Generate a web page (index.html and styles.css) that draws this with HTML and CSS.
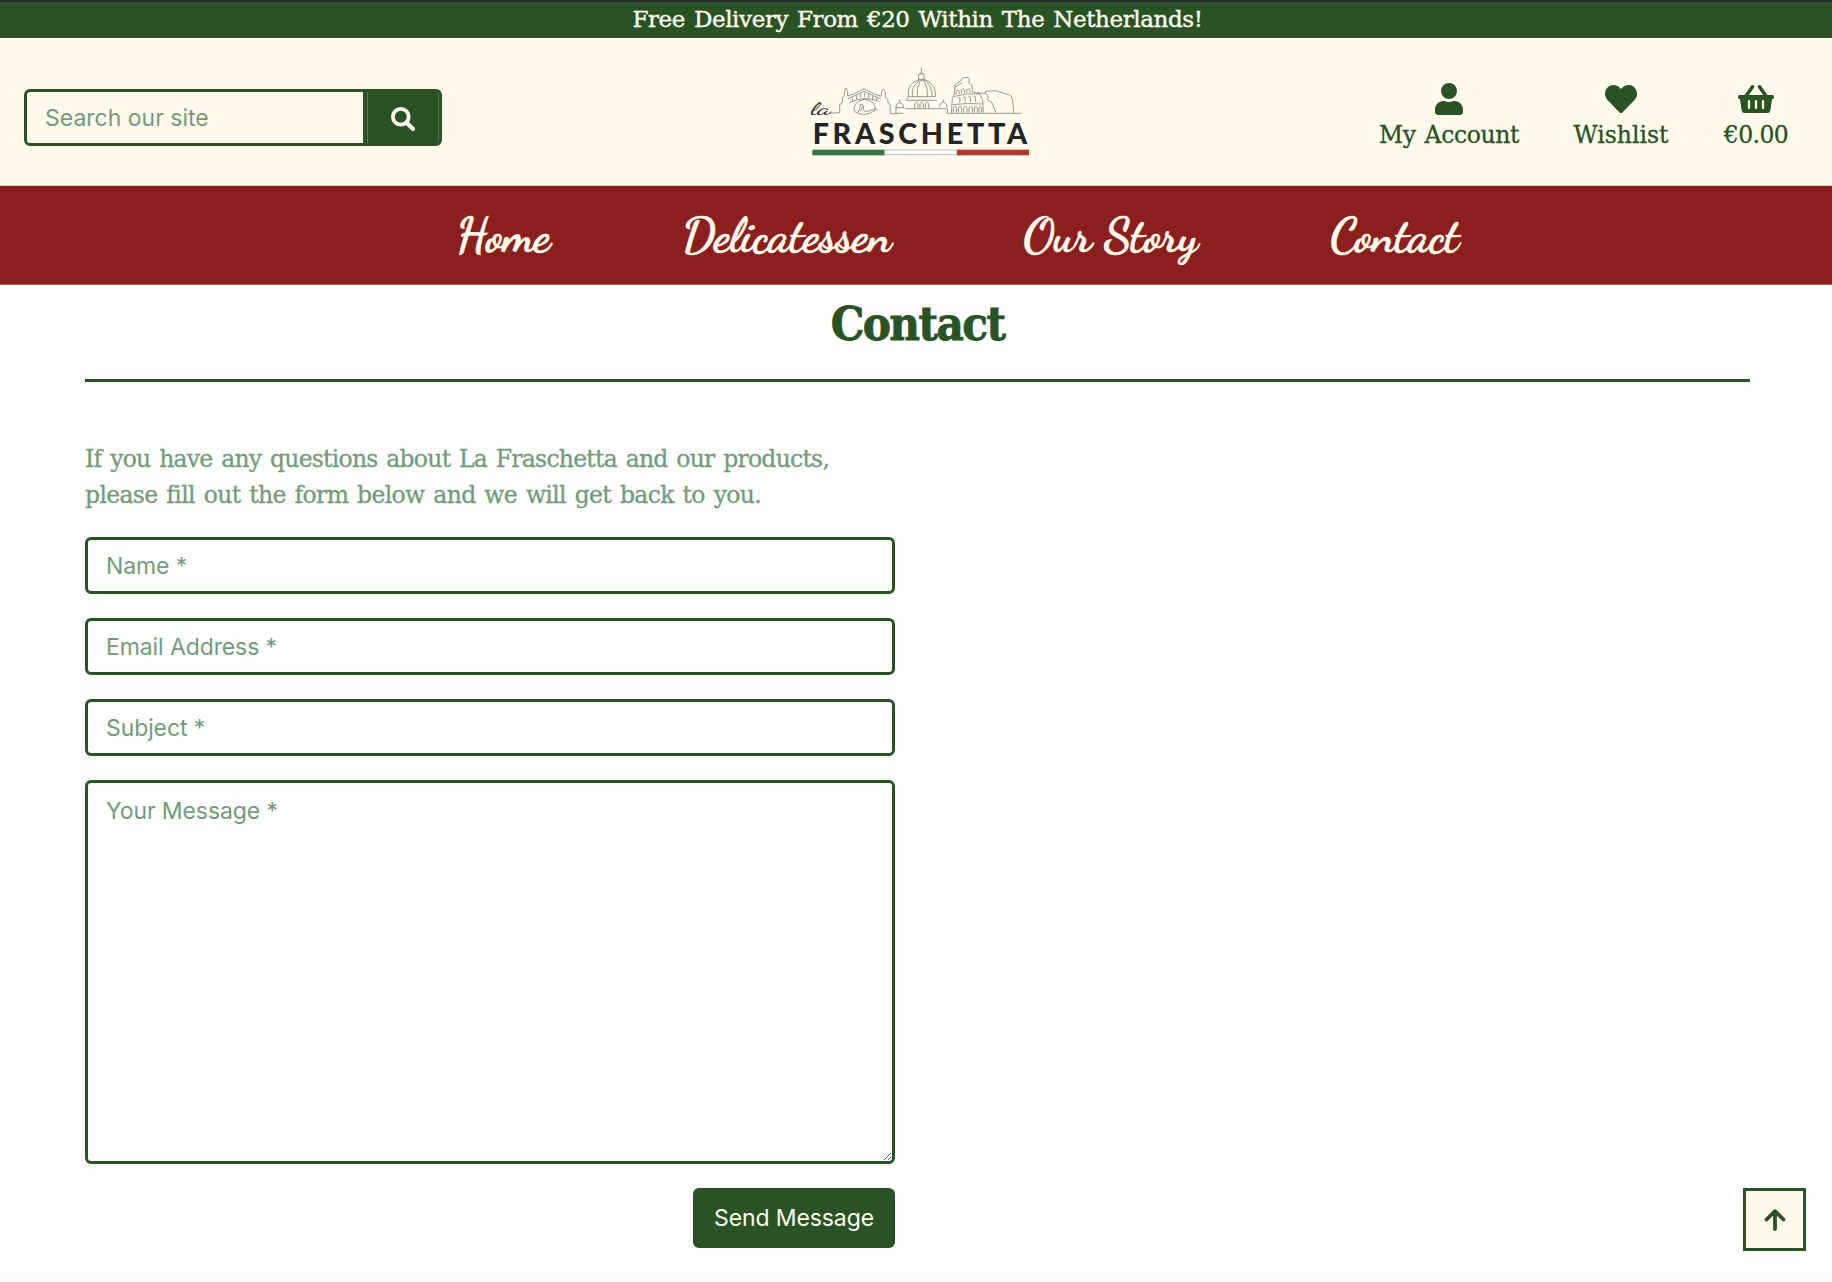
FILE: index.html
```html
<!DOCTYPE html>
<html lang="en">
<head>
<meta charset="utf-8">
<title>La Fraschetta - Contact</title>
<link rel="stylesheet" href="styles.css">
</head>
<body>
<div class="banner"><span>Free Delivery From €20 Within The Netherlands!</span></div>
<header class="header">
  <form class="search">
    <input class="search-input" type="text" placeholder="Search our site">
    <button class="search-button" type="button" aria-label="Search">
      <svg width="24" height="24" viewBox="0 0 24 24" fill="none" stroke="currentColor" stroke-width="3.800" stroke-linecap="round"><circle cx="9.800" cy="9.800" r="7.900"/><path d="M16 16L22 22" stroke-width="4.200"/></svg>
    </button>
  </form>
  <a class="logo" aria-label="La Fraschetta">
    <svg width="260" height="120" viewBox="0 0 780 360">
      <g class="skyline">
        <path d="M116 190L149 188L149 164L156 160L158 142L163 136L163 124L168 114L173 124L173 138L196 130L222 116L244 128L273 139L275 126L280 117L286 125L286 142L293 147L294 158L300 162L301 191L318 191L318 172L315 171M174 146L222 124L272 147M178 158Q222 136 268 154M188 143v10M200 136v12M212 131v12M224 129v12M236 132v12M248 137v12M260 143v10M192 184Q190 154 222 148Q256 150 256 180Q240 194 222 193Q206 194 192 184M204 188Q214 166 210 164Q220 160 220 170L210 184M222 168Q214 186 232 184Q248 180 258 176L264 182"/>
        <path d="M318 172Q318 160 329 157Q340 160 341 172M329 157v-8M318 173h24M318 190h22M346 176H444M350 151H440M355 140H436M348 151L355 140Q350 100 384 91L408 91Q440 104 436 140M368 140Q362 112 386 94M382 140Q380 112 390 94M412 140Q414 112 402 94M426 140Q428 112 408 94M386 90V74Q394 62 402 74V90M394 66V52M384 88h22M389 72h12M374 176V162Q379 150 384 162V176M390 176V162Q395 150 400 162V176M406 176V162Q411 150 416 162V176M448 172Q448 160 460 156Q472 160 472 172M460 156v-8M444 176H472V190H694"/>
        <path d="M484 188L487 146L493 132L495 104L510 94L518 84L534 82L538 90L536 98L545 104L548 126L568 130L578 150L580 188M494 112L516 98M498 134V124Q503 116 508 124V132M514 130V120Q519 112 524 120V130M530 128V120Q535 112 540 120V128M490 140Q530 128 568 132M488 164Q530 158 578 162M503 145Q512 136 509 158M519 143Q528 134 525 157M535 141Q544 132 541 156M550 141Q559 132 556 156M490 188V174Q495 164 500 174V188M505 188V174Q510 164 515 174V188M521 188V174Q526 164 531 174V188M537 188V174Q542 164 547 174V188M553 188V174Q558 164 563 174V188M567 188V174Q571 164 575 174V188M562 129L586 130L594 137L593 150L606 158L618 188M586 130V124L616 122L662 136L668 150L671 189"/>
      </g>
      <text class="logo-la" x="62" y="191" textLength="60" lengthAdjust="spacingAndGlyphs">la</text>
      <text class="logo-name" x="68" y="283" textLength="643" lengthAdjust="spacing">FRASCHETTA</text>
      <rect x="67" y="299" width="217" height="17" fill="#397440"/>
      <rect x="284" y="300" width="217" height="14" fill="#fff" stroke="#bbb" stroke-width="3"/>
      <rect x="501" y="299" width="216" height="17" fill="#af3b2c"/>
    </svg>
  </a>
  <div class="account-links">
    <a class="link account"><svg width="28" height="32" viewBox="0 0 448 512"><path fill="currentColor" d="M224 256a128 128 0 1 0 0-256 128 128 0 1 0 0 256zm89.600 32h-16.700a174 174 0 0 1-145.800 0h-16.700C60.200 288 0 348.200 0 422.400V464c0 26.500 21.500 48 48 48h352c26.500 0 48-21.500 48-48v-41.600c0-74.200-60.200-134.400-134.400-134.400z"/></svg><span>My Account</span></a>
    <a class="link wishlist"><svg width="32" height="32" viewBox="0 0 512 512"><path fill="currentColor" d="M462.300 62.600C407.500 15.900 326 24.300 275.700 76.200L256 96.500l-19.700-20.300C186.100 24.300 104.500 15.900 49.700 62.600c-62.800 53.600-66.100 149.800-9.900 207.900l193.500 199.800c12.500 12.900 32.800 12.900 45.300 0l193.500-199.800c56.300-58.100 53-154.300-9.800-207.900z"/></svg><span>Wishlist</span></a>
    <a class="link basket"><svg width="36" height="32" viewBox="0 0 576 512"><path fill="currentColor" d="M24 192H552Q576 192 576 216V232Q576 256 552 256H544L518 440Q510 480 470 480H106Q66 480 58 440L32 256H24Q0 256 0 232V216Q0 192 24 192Z"/><path fill="none" stroke="currentColor" stroke-width="56" stroke-linecap="round" d="M232 60L128 208M344 60L448 208"/><path class="basket-slots" d="M176 288V400M288 288V400M400 288V400"/></svg><span>€0.00</span></a>
  </div>
</header>
<nav class="nav">
  <a class="home">Home</a>
  <a class="deli">Delicatessen</a>
  <a class="story">Our Story</a>
  <a class="contact">Contact</a>
</nav>
<main class="main">
  <h1 class="title">Contact</h1>
  <hr class="rule">
  <form class="form">
    <p class="intro">If you have any questions about La Fraschetta and our products,<br><span class="intro-end">please fill out the form below and we will get back to you.</span></p>
    <input class="field" type="text" placeholder="Name *">
    <input class="field" type="text" placeholder="Email Address *">
    <input class="field" type="text" placeholder="Subject *">
    <textarea class="field message" placeholder="Your Message *"></textarea>
    <button class="send" type="button">Send Message</button>
  </form>
</main>
<a class="to-top" aria-label="Back to top"><svg width="22" height="24" viewBox="0 0 22 24" fill="none" stroke="currentColor" stroke-width="3.800" stroke-linecap="round" stroke-linejoin="round"><path d="M11 21V3.500M2.500 11.500L11 3.200L19.500 11.500"/></svg></a>
</body>
</html>
```
FILE: styles.css
```css
* { box-sizing: border-box; }
body {
  margin: 0;
  height: 1282px;
  overflow: hidden;
  background: linear-gradient(#fefefe 1256px, #fbfbfb 1282px);
  color: #295225;
  font-family: "Roboto Slab", "DejaVu Serif", serif;
}
.banner {
  height: 38px;
  border-top: 2px solid #29272c;
  background: #295225;
  color: #fffaeb;
  font-size: 23px;
  line-height: 35px;
  text-align: center;
  letter-spacing: -0.4px;
  word-spacing: 2px;
  white-space: nowrap;
  padding-left: 3px;
  -webkit-text-stroke: 0.4px;
}
.header {
  height: 148px;
  display: grid;
  grid-template-columns: 790px 260px 1fr;
  background: #fffaeb;
  border-bottom: 1px solid #dccbbd;
}
.search {
  display: flex;
  width: 418px;
  height: 57px;
  margin: 51px 0 0 24px;
}
.search-input {
  width: 342px;
  border: 3px solid #295225;
  border-radius: 6px 0 0 6px;
  background: #fffaeb;
  padding: 1px 18px 0;
}
.search-input, .field, .send {
  font-family: Inter, sans-serif;
  font-size: 23px;
  letter-spacing: -0.1px;
  outline: none;
}
.search-input { letter-spacing: 0; }
::placeholder { color: #739b7b; opacity: 1; }
.search-button {
  flex: 1;
  display: grid;
  place-items: center;
  border: 3px solid #295225;
  border-left-width: 1px;
  border-radius: 0 6px 6px 0;
  background: #295225;
  box-shadow: inset 1px 0 #557650, inset -1px 0 #557650;
  color: #fffaeb;
  padding: 2px 0 0;
}
.logo { padding-top: 12px; }
.logo svg { display: block; }
.skyline { fill: none; stroke: #77766c; stroke-width: 2.2; stroke-linejoin: round; }
.logo-la { font: 500 54px "Dancing Script", cursive; fill: #33332f; }
.logo-name { font: 900 86px Lato, sans-serif; fill: #242326; }
.account-links { display: flex; padding-top: 45px; }
.link {
  display: flex;
  flex-direction: column;
  align-items: center;
  gap: 2px;
  font-size: 23.5px;
  line-height: 36px;
  letter-spacing: -0.4px;
  word-spacing: 2px;
  white-space: nowrap;
  -webkit-text-stroke: 0.3px;
}
.link svg { display: block; }
.basket-slots { fill: none; stroke: #fffaeb; stroke-width: 36; stroke-linecap: round; }
.account { width: 140px; margin-left: 329px; }
.wishlist { width: 96px; margin-left: 54px; letter-spacing: 0; }
.basket { width: 66px; margin-left: 54px; letter-spacing: -0.6px; }
.nav {
  height: 99px;
  display: flex;
  padding-left: 456px;
  border-bottom: 1px solid #b6605f;
  background: #8a1f1d;
  color: #fffaeb;
  font-family: "Dancing Script", cursive;
  font-weight: 700;
  font-size: 48px;
  line-height: 99px;
  letter-spacing: -0.3px;
  white-space: nowrap;
  -webkit-text-stroke: 0.6px;
}
.home { width: 226px; letter-spacing: -0.7px; }
.deli { width: 341px; }
.story { width: 307px; }
.main { padding: 0 82px 0 85px; }
.title {
  margin: 0;
  height: 94px;
  font-size: 47px;
  font-stretch: condensed;
  line-height: 78px;
  text-align: center;
  letter-spacing: -1.6px;
  -webkit-text-stroke: 0.8px;
}
.rule { height: 3px; margin: 0; border: 0; background: #295225; }
.form { width: 810px; display: flex; flex-direction: column; }
.intro {
  margin: 59px 0 24px;
  color: #739b7b;
  font-size: 23.5px;
  line-height: 36px;
  letter-spacing: -0.76px;
  word-spacing: 2px;
  white-space: nowrap;
  -webkit-text-stroke: 0.3px;
}
.intro-end { letter-spacing: -0.66px; }
.field {
  height: 57px;
  margin: 0 0 24px;
  padding: 0 18px;
  border: 3px solid #295225;
  border-radius: 6px;
  background: #fefefe;
}
.message { height: 384px; padding-top: 14px; }
.send {
  align-self: flex-end;
  width: 202px;
  height: 60px;
  border: 0;
  border-radius: 6px;
  background: #295225;
  color: #fffaeb;
  padding: 0;
}
.to-top {
  position: fixed;
  right: 26px;
  bottom: 31px;
  width: 63px;
  height: 63px;
  display: grid;
  place-items: center;
  border: 3px solid #295225;
  background: #fffaeb;
}
```
